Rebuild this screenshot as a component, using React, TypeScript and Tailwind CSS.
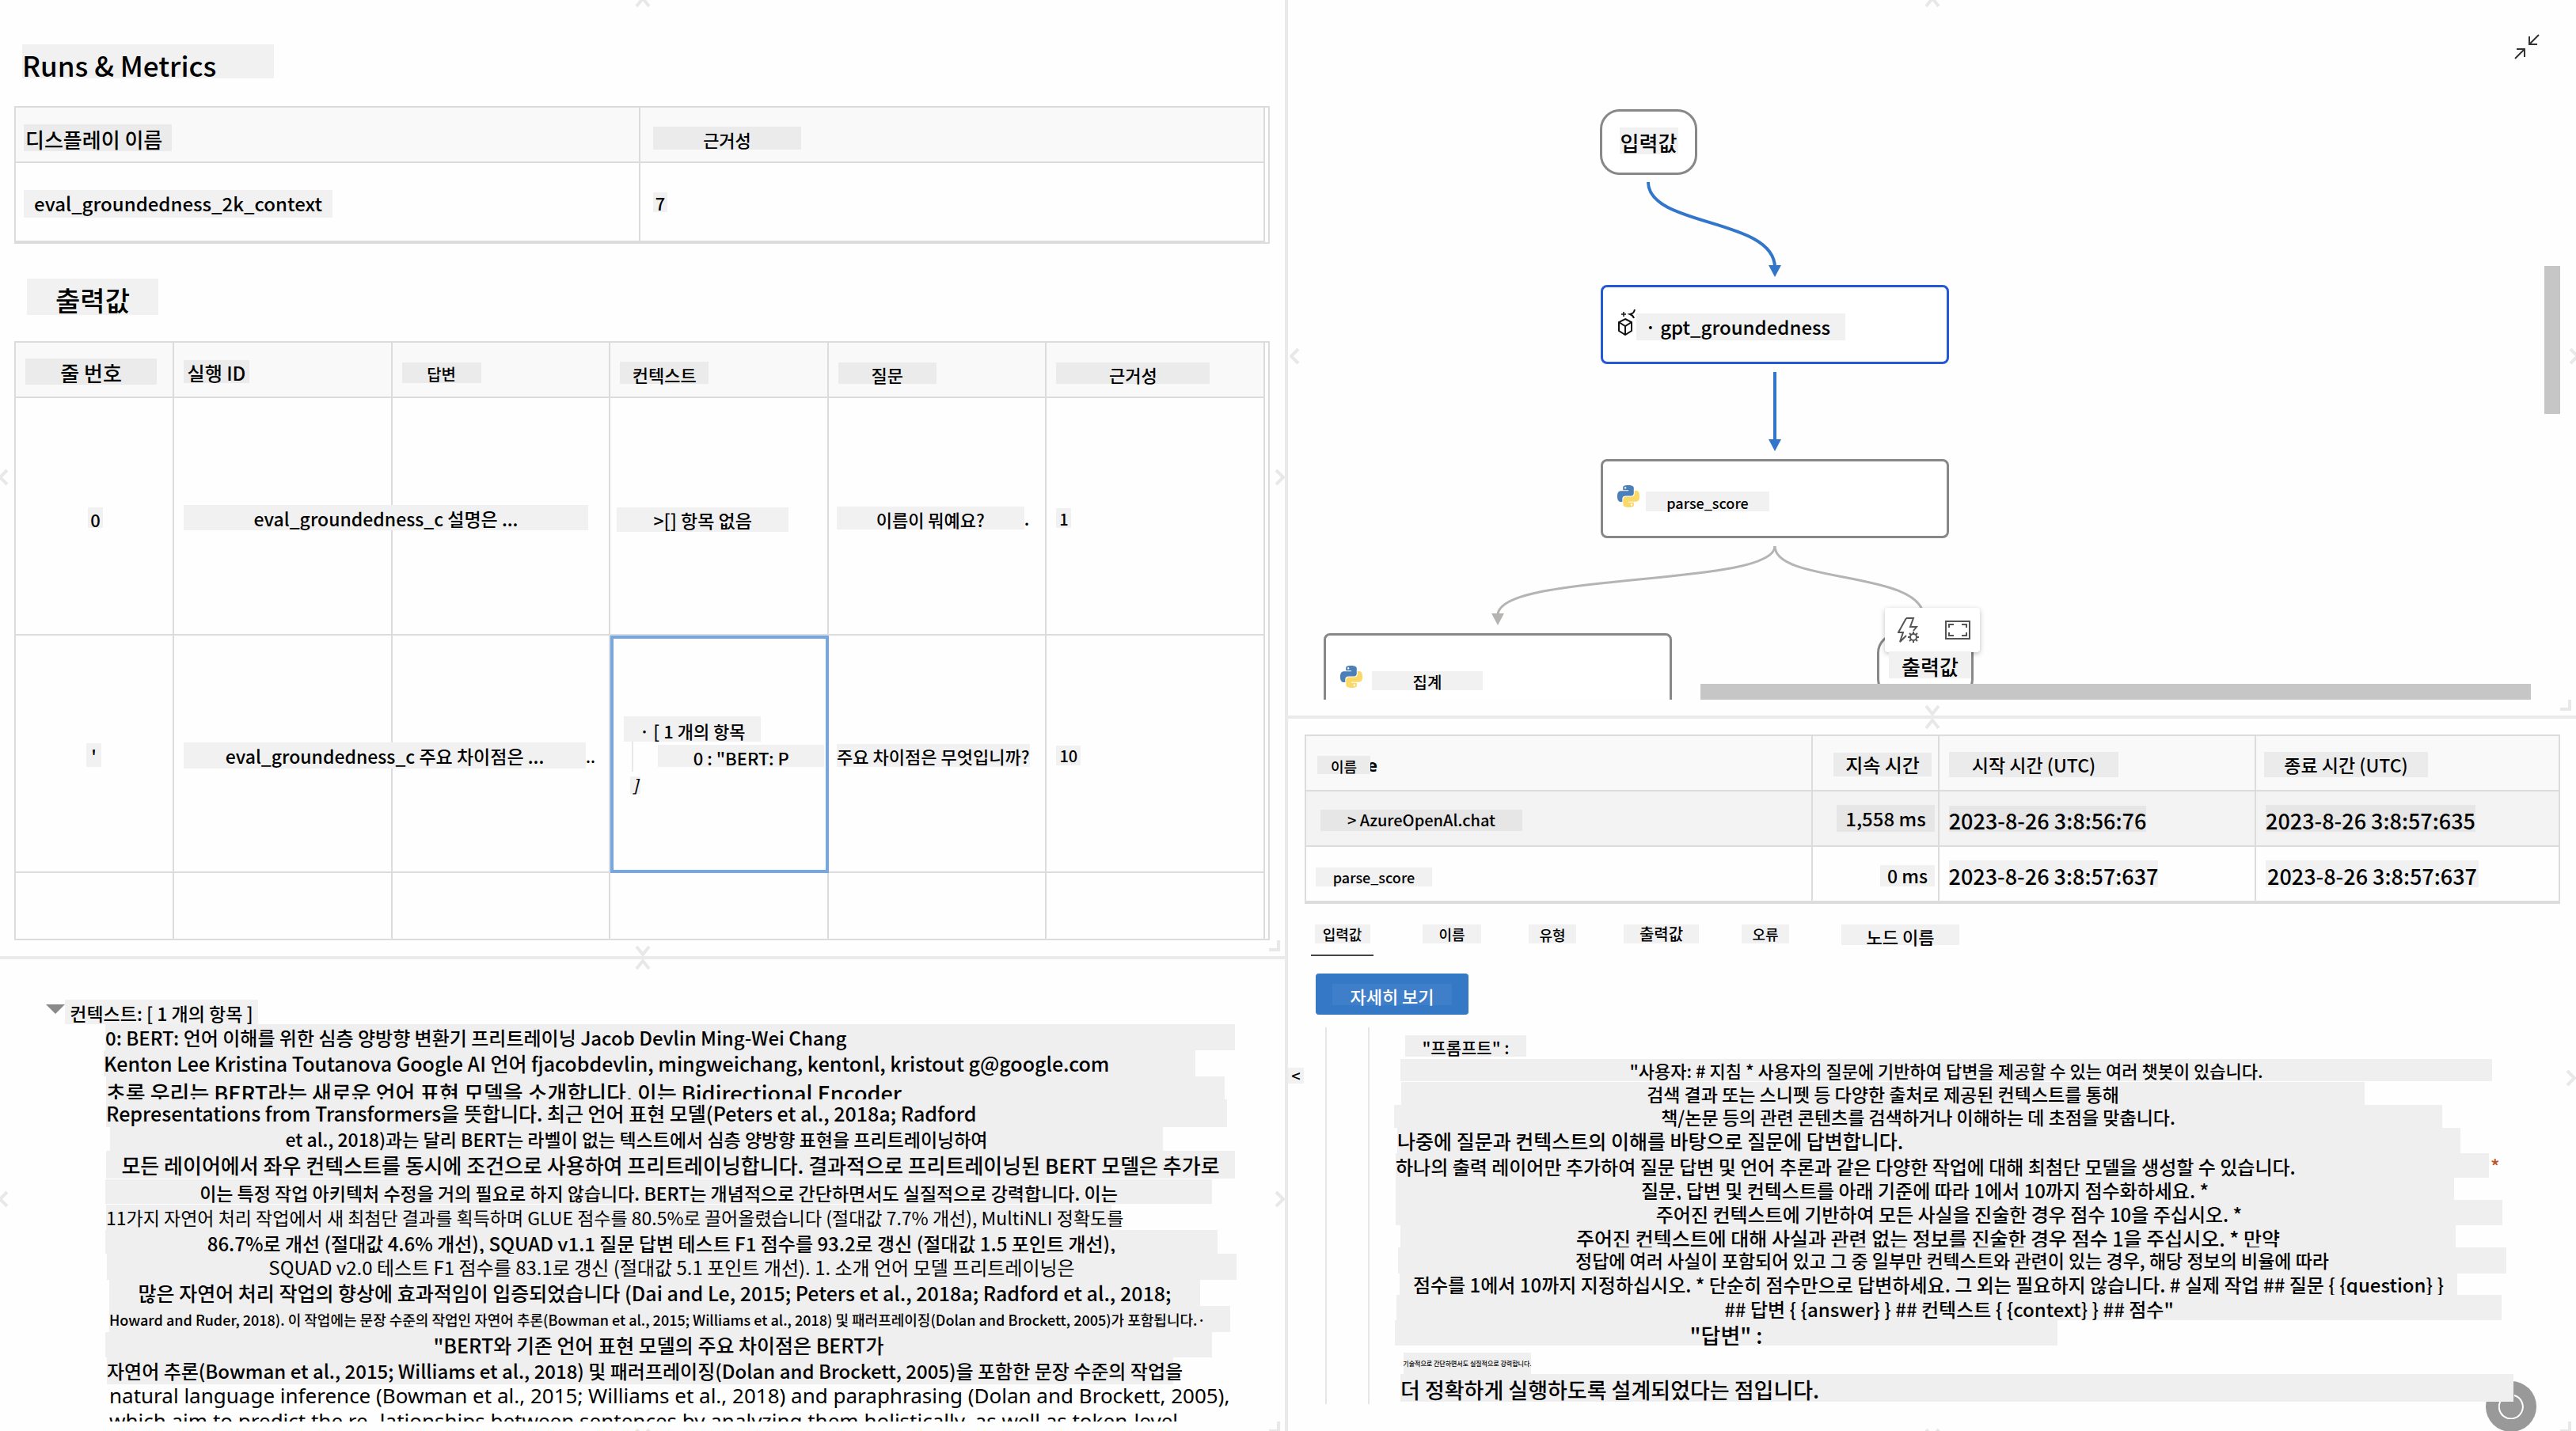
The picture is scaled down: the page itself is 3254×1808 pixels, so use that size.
import type { ReactNode } from "react";

type Dir = "up" | "down" | "left" | "right";

const CHEVRON: Record<Dir, string> = {
  up: "M2 12 10 2l8 10",
  down: "M2 2l8 10 8-10",
  left: "M11 2 2 11l9 9",
  right: "M2 2l9 9-9 9",
};

function Handle({ dir, className }: { dir: Dir; className: string }) {
  const vertical = dir === "up" || dir === "down";
  return (
    <button type="button" aria-label={`패널 이동 ${dir}`} className={`absolute block ${className}`}>
      <svg
        width={vertical ? 20 : 13}
        height={vertical ? 14 : 22}
        viewBox={vertical ? "0 0 20 14" : "0 0 13 22"}
        fill="none"
        stroke="#e8e8e8"
        strokeWidth="4"
        className="block"
      >
        <path d={CHEVRON[dir]} />
      </svg>
    </button>
  );
}

function Corner({ className }: { className: string }) {
  return <span className={`absolute h-3.5 w-3.5 border-r-4 border-b-4 border-[#e8e8e8] ${className}`} />;
}

function Patch({ className, children }: { className: string; children: ReactNode }) {
  return (
    <span className={`flex shrink-0 items-center justify-center leading-none whitespace-pre ${className}`}>
      {children}
    </span>
  );
}

function PythonIcon({ className }: { className: string }) {
  return (
    <svg viewBox="0 0 24 24" className={`h-7 w-7 shrink-0 ${className}`}>
      <path
        fill="#4a7fb8"
        d="M14.25.18l.9.2.73.26.59.3.45.32.34.34.25.34.16.33.1.3.04.26.02.2-.01.13V8.5l-.05.63-.13.55-.21.46-.26.38-.3.31-.33.25-.35.19-.35.14-.33.1-.3.07-.26.04-.21.02H8.77l-.69.05-.59.14-.5.22-.41.27-.33.32-.27.35-.2.36-.15.37-.1.35-.07.32-.04.27-.02.21v3.06H3.17l-.21-.03-.28-.07-.32-.12-.35-.18-.36-.26-.36-.36-.35-.46-.32-.59-.28-.73-.21-.88-.14-1.05-.05-1.23.06-1.22.16-1.04.24-.87.32-.71.36-.57.4-.44.42-.33.42-.24.4-.16.36-.1.32-.05.24-.01h.16l.06.01h8.16v-.83H6.18l-.01-2.75-.02-.37.05-.34.11-.31.17-.28.25-.26.31-.23.38-.2.44-.18.51-.15.58-.12.64-.1.71-.06.77-.04.84-.02 1.27.05zm-6.3 1.98l-.23.33-.08.41.08.41.23.34.33.22.41.09.41-.09.33-.22.23-.34.08-.41-.08-.41-.23-.33-.33-.22-.41-.09-.41.09z"
      />
      <path
        fill="#fbd968"
        d="M21.1 6.11l.28.06.32.12.35.18.36.27.36.35.35.47.32.59.28.73.21.88.14 1.04.05 1.23-.06 1.23-.16 1.04-.24.86-.32.71-.36.57-.4.45-.42.33-.42.24-.4.16-.36.09-.32.05-.24.02-.16-.01h-8.22v.82h5.84l.01 2.76.02.36-.05.34-.11.31-.17.29-.25.25-.31.24-.38.2-.44.17-.51.15-.58.13-.64.09-.71.07-.77.04-.84.01-1.27-.04-1.07-.14-.9-.2-.73-.25-.59-.3-.45-.33-.34-.34-.25-.34-.16-.33-.1-.3-.04-.25-.02-.2.01-.13v-5.34l.05-.64.13-.54.21-.46.26-.38.3-.32.33-.24.35-.2.35-.14.33-.1.3-.06.26-.04.21-.02.13-.01h5.84l.69-.05.59-.14.5-.21.41-.28.33-.32.27-.35.2-.36.15-.36.1-.35.07-.32.04-.28.02-.21V6.07h2.09l.14.01zm-6.47 14.25l-.23.33-.08.41.08.41.23.33.33.23.41.08.41-.08.33-.23.23-.33.08-.41-.08-.41-.23-.33-.33-.23-.41-.08-.41.08z"
      />
    </svg>
  );
}

const th = "border-r-2 border-b-2 border-[#dcdcdc] bg-[#f9f9f9] p-0 text-left font-medium";
const td = "border-r-2 border-b-2 border-[#dcdcdc] p-0";
const lastTd = "border-r-2 border-[#dcdcdc] p-0";

function RunsPanel() {
  return (
    <section className="relative flex min-h-0 flex-col overflow-hidden border-b-4 border-[#eaeaea] pt-14">
      <h1 className="ml-7 font-medium">
        <Patch className="h-[43px] w-[318px] justify-start! bg-[#f1f1f1] pt-2 text-[35px]">Runs &amp; Metrics</Patch>
      </h1>

      <div className="mt-[35px] mr-[19px] ml-[18px] border-2 border-[#dcdcdc] pr-1">
        <table className="w-full table-fixed border-separate border-spacing-0">
          <thead>
            <tr className="h-[70px]">
              <th className={`${th} pt-2 pl-2.5`}>
                <Patch className="h-[34px] w-[187px] justify-start! bg-[#ebebeb] pt-1 pl-0.5 text-[26px]">디스플레이 이름</Patch>
              </th>
              <th className={`${th} pt-2 pl-4`}>
                <Patch className="h-[29px] w-[187px] bg-[#ebebeb] pt-1 text-[22px]">근거성</Patch>
              </th>
            </tr>
          </thead>
          <tbody>
            <tr className="h-[100px]">
              <td className={`${td} pt-1 pl-2.5`}>
                <Patch className="h-[35px] w-[390px] bg-[#f1f1f1] text-2xl">eval_groundedness_2k_context</Patch>
              </td>
              <td className={`${td} pl-4`}>
                <Patch className="h-[25px] w-[18px] bg-[#f1f1f1] pt-0.5 text-[22px]">7</Patch>
              </td>
            </tr>
          </tbody>
        </table>
      </div>

      <h2 className="mt-11 ml-[34px] font-medium">
        <Patch className="h-[46px] w-[166px] bg-[#f1f1f1] pt-2 text-[34px]">출력값</Patch>
      </h2>

      <div className="mt-[33px] mr-[19px] ml-[18px] border-2 border-[#dcdcdc] pr-1">
        <table className="w-full table-fixed border-separate border-spacing-0">
          <colgroup>
            <col className="w-[200px]" />
            <col />
            <col />
            <col />
            <col />
            <col />
          </colgroup>
          <thead>
            <tr className="h-[70px]">
              <th className={`${th} pt-1 pl-3`}>
                <Patch className="h-[33px] w-[166px] bg-[#ebebeb] pt-1 text-[26px]">줄 번호</Patch>
              </th>
              <th className={`${th} pt-1 pl-3`}>
                <Patch className="h-[29px] w-[83px] bg-[#ebebeb] pt-1 text-2xl">실행 ID</Patch>
              </th>
              <th className={`${th} pt-2 pl-3`}>
                <Patch className="h-[26px] w-[100px] bg-[#ebebeb] pt-1 text-xl">답변</Patch>
              </th>
              <th className={`${th} pt-2 pl-3`}>
                <Patch className="h-[28px] w-[112px] bg-[#ebebeb] pt-1 text-[22px]">컨텍스트</Patch>
              </th>
              <th className={`${th} pt-2 pl-3`}>
                <Patch className="h-[27px] w-[124px] bg-[#ebebeb] pt-1 text-[22px]">질문</Patch>
              </th>
              <th className={`${th} pt-2 pl-3`}>
                <Patch className="h-[27px] w-[194px] bg-[#ebebeb] pt-1 text-[22px]">근거성</Patch>
              </th>
            </tr>
          </thead>
          <tbody>
            <tr className="h-[300px]">
              <td className={`${td} pt-1 pl-[91px]`}>
                <Patch className="h-[26px] w-[19px] bg-[#f1f1f1] pt-1 text-[22px]">0</Patch>
              </td>
              <td className={`${td} pt-1 pl-3`}>
                <Patch className="relative h-[32px] w-[511px] bg-[#f1f1f1] pt-0.5 text-[23px]">eval_groundedness_c 설명은 ...</Patch>
              </td>
              <td className={td} />
              <td className={`${td} pt-2 pl-2`}>
                <Patch className="h-[31px] w-[217px] bg-[#f1f1f1] pt-0.5 text-[23px]">&gt;[] 항목 없음</Patch>
              </td>
              <td className={`${td} pt-1 pl-2.5`}>
                <div className="flex">
                  <Patch className="h-[29px] w-[237px] bg-[#f1f1f1] pt-1 text-[22px]">이름이 뭐예요?</Patch>
                  <Patch className="text-[22px]">.</Patch>
                </div>
              </td>
              <td className={`${td} pt-1 pl-3`}>
                <Patch className="h-[25px] w-[19px] bg-[#f1f1f1] pt-1 text-xl">1</Patch>
              </td>
            </tr>
            <tr className="h-[300px]">
              <td className={`${td} pt-1 pl-[89px]`}>
                <Patch className="h-[30px] w-[19px] bg-[#f1f1f1] text-[22px]">'</Patch>
              </td>
              <td className={`${td} pt-1 pl-3`}>
                <div className="flex w-[520px]">
                  <Patch className="relative h-[33px] w-[508px] bg-[#f1f1f1] pt-0.5 text-[23px]">
                    eval_groundedness_c 주요 차이점은 ...
                  </Patch>
                  <Patch className="relative pt-1 text-xl">..</Patch>
                </div>
              </td>
              <td className={td} />
              <td className={`${td} relative pt-1 pl-[17px]`}>
                <span className="absolute top-0 -right-0.5 -bottom-0.5 left-0 border-4 border-[#75a7e4]" />
                <Patch className="h-[32px] w-[173px] bg-[#f1f1f1] pt-1 text-[22px]">· [ 1 개의 항목</Patch>
                <div className="ml-2.5 border-l-2 border-[#e8e8e8] pt-1 pb-1.5 pl-[31px]">
                  <Patch className="relative h-[28px] w-[210px] bg-[#f1f1f1] pt-1 text-[22px]">0 : "BERT: P</Patch>
                </div>
                <Patch className="mt-1.5 ml-2 h-[22px] w-[13px] bg-[#f1f1f1] text-xl italic">]</Patch>
              </td>
              <td className={`${td} pt-1 pl-2.5`}>
                <Patch className="h-[29px] w-[244px] bg-[#f1f1f1] pt-0.5 text-[22px]">주요 차이점은 무엇입니까?</Patch>
              </td>
              <td className={`${td} pt-1 pl-3`}>
                <Patch className="h-[25px] w-[31px] bg-[#f1f1f1] pt-0.5 text-xl">10</Patch>
              </td>
            </tr>
            <tr className="h-[83px]">
              <td className={lastTd} />
              <td className={lastTd} />
              <td className={lastTd} />
              <td className={lastTd} />
              <td className={lastTd} />
              <td className={lastTd} />
            </tr>
          </tbody>
        </table>
      </div>

      <Handle dir="up" className="-top-1 left-1/2 -ml-2.5" />
      <Handle dir="left" className="top-[592px] -left-0.5" />
      <Handle dir="right" className="top-[592px] right-0" />
      <Handle dir="down" className="bottom-0 left-1/2 -ml-2.5" />
      <Corner className="right-1.5 bottom-1.5" />
    </section>
  );
}

const contextLines: { text: string; className: string }[] = [
  { text: "0: BERT: 언어 이해를 위한 심층 양방향 변환기 프리트레이닝 Jacob Devlin Ming-Wei Chang", className: "ml-[133px] w-[1427px] h-[33px] justify-start! text-2xl" },
  { text: "Kenton Lee Kristina Toutanova Google AI 언어 fjacobdevlin, mingweichang, kentonl, kristout g@google.com", className: "ml-[131px] w-[1379px] h-[33px] justify-start! text-[25px]" },
  { text: "초록 우리는 BERT라는 새로운 언어 표현 모델을 소개합니다. 이는 Bidirectional Encoder", className: "ml-[134px] w-[1413px] h-[29px] justify-start! overflow-hidden pt-3 text-[27px]" },
  { text: "Representations from Transformers을 뜻합니다. 최근 언어 표현 모델(Peters et al., 2018a; Radford", className: "ml-[134px] w-[1416px] h-[35px] justify-start! text-[25px]" },
  { text: "et al., 2018)과는 달리 BERT는 라벨이 없는 텍스트에서 심층 양방향 표현을 프리트레이닝하여", className: "ml-[139px] w-[1330px] h-[30px] text-[23px]" },
  { text: "모든 레이어에서 좌우 컨텍스트를 동시에 조건으로 사용하여 프리트레이닝합니다. 결과적으로 프리트레이닝된 BERT 모델은 추가로", className: "ml-[134px] w-[1426px] h-[35px] text-[26px]" },
  { text: "이는 특정 작업 아키텍처 수정을 거의 필요로 하지 않습니다. BERT는 개념적으로 간단하면서도 실질적으로 강력합니다. 이는", className: "mt-px ml-[133px] w-[1398px] h-[31px] pt-1 text-[23px]" },
  { text: "11가지 자연어 처리 작업에서 새 최첨단 결과를 획득하며 GLUE 점수를 80.5%로 끌어올렸습니다 (절대값 7.7% 개선), MultiNLI 정확도를", className: "mt-px ml-[134px] w-[1270px] h-[32px] justify-start! text-[23px] font-normal" },
  { text: "86.7%로 개선 (절대값 4.6% 개선), SQUAD v1.1 질문 답변 테스트 F1 점수를 93.2로 갱신 (절대값 1.5 포인트 개선),", className: "ml-[133px] w-[1405px] h-[30px] pt-1 text-2xl" },
  { text: "SQUAD v2.0 테스트 F1 점수를 83.1로 갱신 (절대값 5.1 포인트 개선). 1. 소개 언어 모델 프리트레이닝은", className: "ml-[135px] w-[1427px] h-[33px] text-2xl font-normal" },
  { text: "많은 자연어 처리 작업의 향상에 효과적임이 입증되었습니다 (Dai and Le, 2015; Peters et al., 2018a; Radford et al., 2018;", className: "ml-[138px] w-[1378px] h-[33px] text-[25px]" },
  { text: "Howard and Ruder, 2018). 이 작업에는 문장 수준의 작업인 자연어 추론(Bowman et al., 2015; Williams et al., 2018) 및 패러프레이징(Dolan and Brockett, 2005)가 포함됩니다.·", className: "ml-[138px] w-[1416px] h-[33px] justify-start! text-lg" },
  { text: "\"BERT와 기존 언어 표현 모델의 주요 차이점은 BERT가", className: "ml-[133px] w-[1398px] h-[32px] text-[25px]" },
  { text: "자연어 추론(Bowman et al., 2015; Williams et al., 2018) 및 패러프레이징(Dolan and Brockett, 2005)을 포함한 문장 수준의 작업을", className: "ml-[135px] w-[1347px] h-[34px] justify-start! text-2xl" },
];

function ContextPanel() {
  return (
    <section className="relative flex min-h-0 flex-col overflow-hidden pt-[51px] pb-3">
      <div className="flex min-h-0 flex-1 flex-col overflow-hidden">
        <div className="flex shrink-0 pl-[58px]">
          <button type="button" aria-label="접기" className="mt-1.5 h-3 w-6">
            <svg viewBox="0 0 24 12" className="block h-3 w-6">
              <path d="M0 0h24L12 12z" fill="#8a8a8a" />
            </svg>
          </button>
          <Patch className="h-[31px] w-[244px] bg-[#f1f1f1] pt-1 text-[23px]">컨텍스트: [ 1 개의 항목 ]</Patch>
        </div>
        {contextLines.map((l) => (
          <Patch key={l.text} className={`bg-[#efefef] ${l.className}`}>
            {l.text}
          </Patch>
        ))}
        <Patch className="ml-[138px] h-7 w-fit justify-start! font-['Noto_Sans',sans-serif] text-[26px] font-normal">
          natural language inference (Bowman et al., 2015; Williams et al., 2018) and paraphrasing (Dolan and Brockett, 2005),
        </Patch>
        <Patch className="ml-[138px] h-[35px] w-fit justify-start! font-['Noto_Sans',sans-serif] text-[26px] font-normal">
          which aim to predict the re- lationships between sentences by analyzing them holistically, as well as token-level
        </Patch>
      </div>
      <Handle dir="up" className="top-0 left-1/2 -ml-2.5" />
      <Handle dir="left" className="top-[292px] -left-0.5" />
      <Handle dir="right" className="top-[292px] right-0" />
      <Handle dir="down" className="-bottom-2.5 left-1/2 -ml-2.5" />
      <Corner className="right-1.5 -bottom-0.5" />
    </section>
  );
}

function GraphPanel() {
  return (
    <section className="relative min-h-0 overflow-hidden border-b-4 border-[#eaeaea] pb-5">
      <div className="relative h-full overflow-hidden">
        <svg className="absolute inset-0 h-full w-full" fill="none" strokeWidth="4">
          <g stroke="#3276cc">
            <path d="M455 230C455 287 615 275 615 338" />
            <path d="M615 470V557" />
          </g>
          <g fill="#3276cc">
            <path d="M607 335h16l-8 15z" />
            <path d="M607 555h16l-8 15z" />
          </g>
          <g stroke="#b5b4b2" strokeWidth="3">
            <path d="M615 690C615 742 265 722 265 777" />
            <path d="M615 690C615 738 803 720 803 780" />
          </g>
          <path d="M257 775h16l-8 15z" fill="#b5b4b2" />
        </svg>

        <div className="absolute top-[138px] left-[394px] flex h-[83px] w-[123px] items-center justify-center rounded-[25px] border-3 border-[#8a8886] bg-white pb-1">
          <Patch className="h-[34px] w-[74px] bg-[#f1f1f1] pt-1 text-[26px]">입력값</Patch>
        </div>

        <div className="absolute top-[360px] left-[395px] flex h-[100px] w-[440px] rounded-lg border-3 border-[#2458d4] bg-white pl-[18px]">
          <svg viewBox="0 0 24 34" className="mt-[27px] h-[34px] w-6 shrink-0" fill="none" stroke="#111" strokeWidth="2">
            <path d="M10 13l8 4v11l-8 5-8-5V17zM2 17l8 5 8-5M10 22v11" />
            <path d="M8 4v6M5 7h6" strokeWidth="1.5" />
            <path d="M22 1c-1 4-2 5-6 6 3 1 4 2 5 5" />
          </svg>
          <Patch className="mt-[33px] h-[34px] w-[264px] bg-[#f1f1f1] pr-2 text-2xl">· gpt_groundedness</Patch>
        </div>

        <div className="absolute top-[580px] left-[395px] flex h-[100px] w-[440px] rounded-lg border-3 border-[#8a8886] bg-white pl-[18px]">
          <PythonIcon className="mt-[30px]" />
          <Patch className="mt-[38px] ml-2 h-[25px] w-[156px] bg-[#f1f1f1] pt-0.5 text-lg">parse_score</Patch>
        </div>

        <div className="absolute top-[800px] left-[45px] flex h-[100px] w-[440px] rounded-lg border-3 border-[#8a8886] bg-white pl-[18px]">
          <PythonIcon className="mt-[38px]" />
          <Patch className="mt-[45px] ml-3 h-[24px] w-[140px] bg-[#f1f1f1] pt-1 text-xl">집계</Patch>
        </div>

        <div className="absolute top-[800px] left-[744px] h-[83px] w-[122px] rounded-[25px] border-3 border-[#8a8886] bg-white" />
        <div className="absolute top-[768px] left-[754px] flex h-[56px] w-[120px] items-center justify-between rounded bg-white pr-3 pl-4 shadow-[0_2px_6px_rgba(0,0,0,0.25)]">
          <button type="button" aria-label="실행 설정">
            <svg viewBox="0 0 28 32" className="h-8 w-7" fill="none" stroke="#555" strokeWidth="2">
              <path d="M11 1h9l-4 11h8l-4 5M11 1 1 19h6L3 31l8-8" />
              <circle cx="20" cy="25" r="4" />
              <path d="M20 18v3M20 29v3M13 25h3M24 25h3M15 20l2 2M23 28l2 2M25 20l-2 2M17 28l-2 2" />
            </svg>
          </button>
          <button type="button" aria-label="전체 화면">
            <svg viewBox="0 0 32 24" className="h-6 w-8" fill="none" stroke="#555" strokeWidth="2">
              <path d="M1 1h30v22H1z" />
              <path d="M5 9V5h6M21 5h6v4M27 15v4h-6M11 19H5v-4" />
            </svg>
          </button>
        </div>
        <Patch className="absolute top-[823px] left-[759px] h-[34px] w-[104px] bg-[#f1f1f1] pt-1 text-[26px]">출력값</Patch>
      </div>

      <div className="absolute right-[57px] bottom-5 left-[521px] h-5 bg-[#c6c6c6]" />
      <div className="absolute top-[336px] right-5 h-[187px] w-5 bg-[#c6c6c6]" />
      <button type="button" aria-label="축소" className="absolute top-[43px] right-[46px]">
        <svg viewBox="0 0 32 32" className="h-8 w-8" fill="none" stroke="#333" strokeWidth="2">
          <path d="M31 1 19 13M19 3v10h10M1 31l12-12M3 19h10v10" />
        </svg>
      </button>
      <Handle dir="up" className="-top-1 left-1/2 -ml-2.5" />
      <Handle dir="left" className="top-[439px] left-0.5" />
      <Handle dir="right" className="top-[439px] -right-1" />
      <Handle dir="down" className="bottom-0 left-1/2 -ml-2.5" />
      <Corner className="right-1.5 bottom-1.5" />
    </section>
  );
}

const tabs: { label: string; tab: string; patch: string }[] = [
  { label: "입력값", tab: "w-[79px] border-b-2 border-[#444]", patch: "h-6 w-[70px] text-lg" },
  { label: "이름", tab: "ml-[62px]", patch: "h-6 w-[74px] text-lg" },
  { label: "유형", tab: "ml-[60px]", patch: "h-6 w-[60px] pt-0.5 text-lg" },
  { label: "출력값", tab: "ml-[60px]", patch: "h-6 w-[95px] text-xl" },
  { label: "오류", tab: "ml-[54px]", patch: "h-6 w-[60px] text-lg" },
  { label: "노드 이름", tab: "ml-[66px]", patch: "h-[26px] w-[149px] pt-1 text-[22px]" },
];

const promptLines: { text: string; className: string; star?: boolean }[] = [
  { text: "\"프롬프트\" :", className: "mb-[3px] ml-[45px] w-[153px] h-[27px] pt-1 text-[21px]" },
  { text: "\"사용자: # 지침 * 사용자의 질문에 기반하여 답변을 제공할 수 있는 여러 챗봇이 있습니다.", className: "ml-[39px] w-[1379px] h-[28px] text-[22px]" },
  { text: "검색 결과 또는 스니펫 등 다양한 출처로 제공된 컨텍스트를 통해", className: "mt-px ml-10 w-[1217px] h-[29px] pt-0.5 text-[23px]" },
  { text: "책/논문 등의 관련 콘텐츠를 검색하거나 이해하는 데 초점을 맞춥니다.", className: "ml-[31px] w-[1324px] h-[29px] pt-0.5 text-[23px]" },
  { text: "나중에 질문과 컨텍스트의 이해를 바탕으로 질문에 답변합니다.", className: "ml-[35px] w-[1343px] h-[32px] justify-start! text-[25px]" },
  { text: "하나의 출력 레이어만 추가하여 질문 답변 및 언어 추론과 같은 다양한 작업에 대해 최첨단 모델을 생성할 수 있습니다.", className: "ml-[33px] w-[1381px] h-[31px] justify-start! pt-0.5 text-2xl", star: true },
  { text: "질문, 답변 및 컨텍스트를 아래 기준에 따라 1에서 10까지 점수화하세요. *", className: "ml-[33px] w-[1337px] h-[28px] pt-1 text-2xl" },
  { text: "주어진 컨텍스트에 기반하여 모든 사실을 진술한 경우 점수 10을 주십시오. *", className: "ml-[33px] w-[1398px] h-[32px] pt-1 text-2xl" },
  { text: "주어진 컨텍스트에 대해 사실과 관련 없는 정보를 진술한 경우 점수 1을 주십시오. * 만약", className: "ml-[39px] w-[1333px] h-[28px] pt-1 text-[25px]" },
  { text: "정답에 여러 사실이 포함되어 있고 그 중 일부만 컨텍스트와 관련이 있는 경우, 해당 정보의 비율에 따라", className: "ml-9 w-[1400px] h-[33px] text-[23px]" },
  { text: "점수를 1에서 10까지 지정하십시오. * 단순히 점수만으로 답변하세요. 그 외는 필요하지 않습니다. # 실제 작업 ## 질문 { {question} }", className: "ml-[38px] w-[1336px] h-[27px] text-2xl" },
  { text: "## 답변 { {answer} } ## 컨텍스트 { {context} } ## 점수\"", className: "ml-[34px] w-[1396px] h-[32px] pt-1 text-2xl" },
  { text: "\"답변\" :", className: "mb-[9px] ml-8 w-[837px] h-[32px] pt-1 text-[27px]" },
  { text: "기술적으로 간단하면서도 실질적으로 강력합니다.", className: "ml-[43px] w-[161px] h-[27px] text-[8px]" },
  { text: "더 정확하게 실행하도록 설계되었다는 점입니다.", className: "ml-[39px] w-[1406px] h-[35px] justify-start! pt-1 text-[27px]" },
];

function TracePanel() {
  return (
    <section className="relative flex min-h-0 flex-col overflow-hidden pt-5">
      <div className="mr-5 ml-[21px] border-2 border-r-0 border-[#dcdcdc]">
        <table className="w-full table-fixed border-separate border-spacing-0">
          <colgroup>
            <col />
            <col className="w-[160px]" />
            <col className="w-[400px]" />
            <col className="w-[384px]" />
          </colgroup>
          <thead>
            <tr className="h-[70px]">
              <th className={`${th} pt-1 pl-3.5`}>
                <div className="flex items-center">
                  <Patch className="relative h-[23px] w-[67px] bg-[#ebebeb] pt-1 text-lg">이름</Patch>
                  <Patch className="-ml-1 h-[23px] font-['Open_Sans',sans-serif] text-[22px] font-bold">e</Patch>
                </div>
              </th>
              <th className={`${th} pt-1`}>
                <Patch className="mr-2 ml-auto h-[30px] w-[124px] bg-[#ebebeb] text-2xl">지속 시간</Patch>
              </th>
              <th className={`${th} pt-1 pl-3`}>
                <Patch className="h-[32px] w-[214px] bg-[#ebebeb] text-[23px]">시작 시간 (UTC)</Patch>
              </th>
              <th className={`${th} pt-1 pl-2.5`}>
                <Patch className="h-[32px] w-[207px] bg-[#ebebeb] text-[23px]">종료 시간 (UTC)</Patch>
              </th>
            </tr>
          </thead>
          <tbody>
            <tr className="h-[70px] bg-[#f3f3f3]">
              <td className={`${td} pt-1 pl-[18px]`}>
                <Patch className="h-[27px] w-[255px] bg-[#e6e6e6] text-xl">&gt; AzureOpenAl.chat</Patch>
              </td>
              <td className={td}>
                <Patch className="mr-1 ml-auto h-[34px] w-[124px] bg-[#e6e6e6] text-2xl">1,558 ms</Patch>
              </td>
              <td className={`${td} pl-3`}>
                <Patch className="h-[33px] w-[249px] bg-[#e6e6e6] pt-1 text-[27px]">2023-8-26 3:8:56:76</Patch>
              </td>
              <td className={`${td} pl-3`}>
                <Patch className="h-[34px] w-[265px] bg-[#e6e6e6] pt-1 text-[27px]">2023-8-26 3:8:57:635</Patch>
              </td>
            </tr>
            <tr className="h-[70px]">
              <td className={`${td} pt-2 pl-3`}>
                <Patch className="h-[24px] w-[147px] bg-[#f1f1f1] text-lg">parse_score</Patch>
              </td>
              <td className={`${td} pt-1`}>
                <Patch className="mr-1 ml-auto h-[27px] w-[69px] bg-[#f1f1f1] text-[23px]">0 ms</Patch>
              </td>
              <td className={`${td} pl-3`}>
                <Patch className="h-[34px] w-[264px] bg-[#f1f1f1] pt-1 text-[27px]">2023-8-26 3:8:57:637</Patch>
              </td>
              <td className={`${td} pl-3`}>
                <Patch className="h-[34px] w-[269px] bg-[#f1f1f1] pt-1 text-[27px]">2023-8-26 3:8:57:637</Patch>
              </td>
            </tr>
          </tbody>
        </table>
      </div>

      <div role="tablist" className="mt-[26px] ml-[29px] flex h-10 shrink-0">
        {tabs.map((t, i) => (
          <button
            key={t.label}
            type="button"
            role="tab"
            aria-selected={i === 0}
            className={`flex shrink-0 items-start justify-center ${t.tab}`}
          >
            <Patch className={`bg-[#f1f1f1] ${t.patch}`}>{t.label}</Patch>
          </button>
        ))}
      </div>

      <button
        type="button"
        className="mt-[22px] ml-[35px] flex h-[52px] w-[193px] shrink-0 items-center justify-center rounded bg-[#3478c6] text-white"
      >
        <Patch className="h-[27px] w-[151px] bg-[#3f7ec9] pt-1 text-[22px]">자세히 보기</Patch>
      </button>

      <div className="relative z-10 mt-4 ml-[47px] shrink-0 border-l-2 border-[#e6e6e6]">
        <div className="ml-[52px] border-l-2 border-[#e6e6e6] pt-2.5 pb-[3px]">
          {promptLines.map((l) => (
            <div key={l.text} className="flex">
              <Patch className={`bg-[#efefef] ${l.className}`}>{l.text}</Patch>
              {l.star && <span className="ml-0.5 pt-1 text-2xl leading-none text-[#c0562a]">*</span>}
            </div>
          ))}
        </div>
      </div>

      <button
        type="button"
        aria-label="새로 고침"
        className="absolute right-[50px] -bottom-px flex h-16 w-16 items-center justify-center rounded-full bg-[#999]"
      >
        <svg viewBox="0 0 32 32" className="h-8 w-8" fill="none" stroke="#fff" strokeWidth="2">
          <path d="M20 2A15 15 0 1 1 5 6" />
        </svg>
      </button>

      <Handle dir="up" className="top-0 left-1/2 -ml-2.5" />
      <div className="absolute top-[441px] left-0">
        <Patch className="h-5 w-5 bg-[#f1f1f1] text-xl">&lt;</Patch>
      </div>
      <Handle dir="right" className="top-[443px] right-0" />
      <Handle dir="down" className="-bottom-2.5 left-1/2 -ml-2.5" />
      <Corner className="right-1.5 -bottom-0.5" />
    </section>
  );
}

export default function App() {
  return (
    <main className="grid h-screen grid-cols-2 grid-rows-1 overflow-hidden bg-[#fefefe] font-['Noto_Sans_CJK_KR',sans-serif] font-medium text-black">
      <div className="grid min-h-0 min-w-0 grid-rows-[303fr_149fr] border-r-4 border-[#eaeaea]">
        <RunsPanel />
        <ContextPanel />
      </div>
      <div className="grid min-h-0 min-w-0 grid-rows-[227fr_225fr]">
        <GraphPanel />
        <TracePanel />
      </div>
    </main>
  );
}
